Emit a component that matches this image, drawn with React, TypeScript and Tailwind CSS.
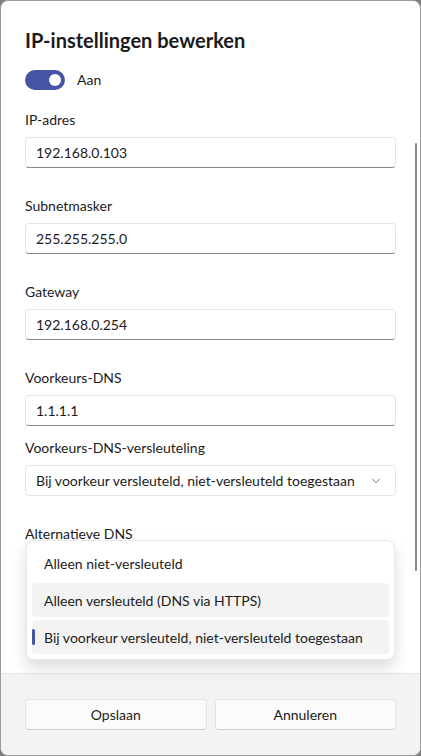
import { ChevronDown } from 'lucide-react';

const font = { fontFamily: 'Lato, "Noto Sans", sans-serif' };

type FieldProps = { label: string; value: string };

function TextField({ label, value }: FieldProps) {
  return (
    <div className="flex flex-col">
      <div className="h-[20px] text-[14px] leading-[20px] text-[#1b1b1b]">{label}</div>
      <div className="mt-[7px] flex h-[31px] items-center rounded-[4px] border border-[#e5e5e5] border-b-[#8a8a8a] bg-white px-[10px] text-[14px] text-[#1b1b1b]">
        {value}
      </div>
    </div>
  );
}

export default function App() {
  const options = [
    { label: 'Alleen niet-versleuteld', hover: false, selected: false },
    { label: 'Alleen versleuteld (DNS via HTTPS)', hover: true, selected: false },
    { label: 'Bij voorkeur versleuteld, niet-versleuteld toegestaan', hover: false, selected: true },
  ];

  return (
    <div className="h-[756px] w-[421px] bg-[#7f7f7f]" style={font}>
      <div className="flex h-full w-full flex-col overflow-hidden rounded-[8px] border border-[#9b9b9b] bg-white">
        {/* Scrollable content */}
        <div className="relative flex-1 px-[24px] pt-[25px]">
          <h1 className="text-[20px] font-bold leading-[28px] text-[#1b1b1b]">IP-instellingen bewerken</h1>

          <div className="mt-[15px] flex items-center gap-[12px]">
            <div className="flex h-[20px] w-[40px] items-center justify-end rounded-full bg-[#4654a4] pr-[4px]">
              <div className="h-[12px] w-[12px] rounded-full bg-white" />
            </div>
            <span className="text-[14px] text-[#1b1b1b]">Aan</span>
          </div>

          <div className="mt-[20px] flex flex-col gap-[28px]">
            <TextField label="IP-adres" value="192.168.0.103" />
            <TextField label="Subnetmasker" value="255.255.255.0" />
            <TextField label="Gateway" value="192.168.0.254" />
          </div>

          <div className="mt-[28px]">
            <TextField label="Voorkeurs-DNS" value="1.1.1.1" />
          </div>

          <div className="mt-[12px] flex flex-col">
            <div className="h-[20px] text-[14px] leading-[20px] text-[#1b1b1b]">Voorkeurs-DNS-versleuteling</div>
            <div className="mt-[7px] flex h-[31px] items-center justify-between rounded-[4px] border border-[#e5e5e5] bg-white pl-[10px] pr-[12px] text-[14px] text-[#1b1b1b]">
              <span className="whitespace-nowrap">Bij voorkeur versleuteld, niet-versleuteld toegestaan</span>
              <ChevronDown className="h-[14px] w-[14px] shrink-0 text-[#5f5f5f]" strokeWidth={1.5} />
            </div>
          </div>

          <div className="mt-[28px] h-[20px] text-[14px] leading-[20px] text-[#1b1b1b]">Alternatieve DNS</div>

          {/* Open dropdown popup */}
          <div className="absolute left-[25px] right-[25px] top-[539px] rounded-[8px] border border-[#e8e8e8] bg-white px-[5px] py-[5px] shadow-[0_8px_16px_rgba(0,0,0,0.14)]">
            <div className="flex flex-col gap-[3px]">
              {options.map((o) => (
                <div
                  key={o.label}
                  className={
                    'relative flex h-[34px] items-center whitespace-nowrap rounded-[4px] pl-[12px] text-[14px] text-[#1b1b1b] ' +
                    (o.hover || o.selected ? 'bg-[#f3f3f3]' : '')
                  }
                >
                  {o.selected && (
                    <div className="absolute left-0 top-[9px] h-[16px] w-[3px] rounded-full bg-[#4654a4]" />
                  )}
                  {o.label}
                </div>
              ))}
            </div>
          </div>

          {/* Scrollbar */}
          <div className="absolute right-[3px] top-[142px] h-[428px] w-[2px] rounded-full bg-[#8a8a8a]" />
        </div>

        {/* Footer */}
        <div className="flex h-[82px] gap-[8px] border-t border-[#e5e5e5] bg-[#f3f3f3] px-[24px] pt-[25px]">
          <button className="h-[31px] flex-1 rounded-[4px] border border-[#e5e5e5] border-b-[#cfcfcf] bg-[#fbfbfb] text-[14px] text-[#1b1b1b]">
            Opslaan
          </button>
          <button className="h-[31px] flex-1 rounded-[4px] border border-[#e5e5e5] border-b-[#cfcfcf] bg-[#fbfbfb] text-[14px] text-[#1b1b1b]">
            Annuleren
          </button>
        </div>
      </div>
    </div>
  );
}
